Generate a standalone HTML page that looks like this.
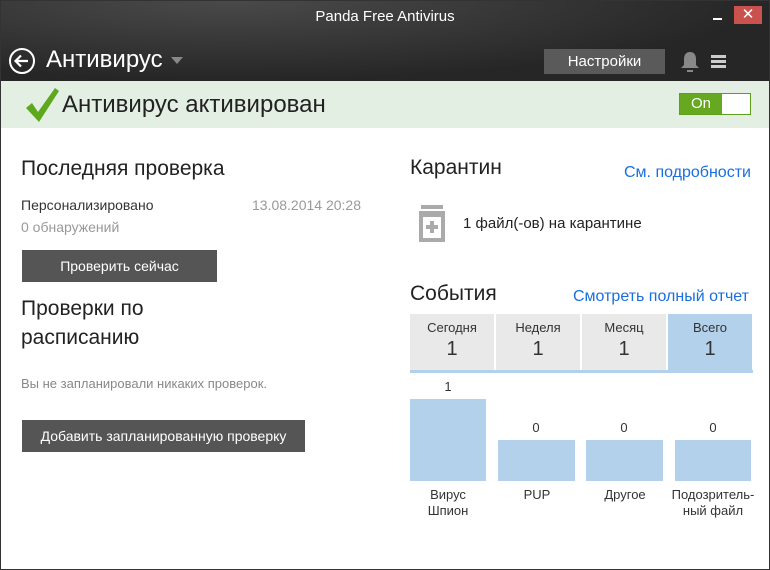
<!DOCTYPE html><html><head><style>
*{margin:0;padding:0;box-sizing:border-box}
body{width:770px;height:570px;overflow:hidden;font-family:"Liberation Sans",sans-serif;background:#fff;position:relative}
.a{position:absolute;white-space:nowrap}
#hd{position:absolute;left:0;top:0;width:770px;height:81px;background:radial-gradient(ellipse at 30% 0%,#4a4a4a,#262626 70%)}
#st{position:absolute;left:0;top:81px;width:770px;height:47px;background:#e4efe4}
.btn{position:absolute;background:#555;color:#fff;font-size:14px;text-align:center}
.tab{position:absolute;top:314px;width:84px;height:56px;background:#e9e9e9;text-align:center;font-size:13px;color:#333;padding-top:6px}
.tab b{display:block;font-weight:normal;font-size:20px;margin-top:3px}
.bar{position:absolute;background:#b3d1ea}
.n{position:absolute;font-size:13px;color:#333;text-align:center;width:76px}
.l{position:absolute;font-size:13px;color:#333;text-align:center;width:90px;line-height:16px}
</style></head><body>
<div id="hd"></div>
<div class="a" style="left:0;width:770px;top:8px;text-align:center;color:#fff;font-size:15px">Panda Free Antivirus</div>
<div class="a" style="left:713px;top:18px;width:9px;height:2px;background:#fff"></div>
<div class="a" style="left:734px;top:6px;width:28px;height:18px;background:#c9524f;color:#fff;font-size:15px;text-align:center;line-height:18px">✕</div>
<svg class="a" style="left:8px;top:47px" width="28" height="28" viewBox="0 0 28 28"><circle cx="14" cy="14" r="12" fill="none" stroke="#fff" stroke-width="2"/><path d="M20 14H8M13 8.5L7.5 14 13 19.5" fill="none" stroke="#fff" stroke-width="2.2"/></svg>
<div class="a" style="left:46px;top:46px;color:#fff;font-size:24px">Антивирус</div>
<div class="a" style="left:171px;top:57px;border-left:6px solid transparent;border-right:6px solid transparent;border-top:7px solid #888"></div>
<div class="btn" style="left:544px;top:49px;width:121px;height:25px;line-height:25px;background:#5a5a5a;font-size:15px">Настройки</div>
<svg class="a" style="left:679px;top:50px" width="22" height="24" viewBox="0 0 22 24"><path d="M11 2c-4 0-6 3-6 7v6l-3 3h18l-3-3V9c0-4-2-7-6-7zM8 20h6v2H8z" fill="#888"/></svg>
<div class="a" style="left:711px;top:55px;width:15px;height:3px;background:#ccc;box-shadow:0 5px 0 #ccc,0 10px 0 #ccc"></div>
<div id="st"></div>
<svg class="a" style="left:24px;top:86px" width="36" height="38" viewBox="0 0 36 38"><path d="M2 22l6-5 6 9L31 2l4 3-20 31z" fill="#5ea81e"/></svg>
<div class="a" style="left:62px;top:91px;font-size:24px;color:#222">Антивирус активирован</div>
<div class="a" style="left:679px;top:93px;width:72px;height:22px;border:1px solid #5e9e1c;background:#fff"><div style="width:42px;height:20px;background:#66a81f;color:#fff;font-size:15px;text-align:center;line-height:20px">On</div></div>
<div class="a" style="left:21px;top:157px;font-size:21px;color:#222">Последняя проверка</div>
<div class="a" style="left:21px;top:197px;font-size:14px;color:#333">Персонализировано</div>
<div class="a" style="left:252px;top:197px;font-size:14px;color:#999">13.08.2014 20:28</div>
<div class="a" style="left:21px;top:219px;font-size:14px;color:#999">0 обнаружений</div>
<div class="btn" style="left:22px;top:250px;width:195px;height:32px;line-height:32px">Проверить сейчас</div>
<div class="a" style="left:21px;top:294px;font-size:21px;color:#222;line-height:29px">Проверки по<br>расписанию</div>
<div class="a" style="left:21px;top:376px;font-size:13px;color:#888">Вы не запланировали никаких проверок.</div>
<div class="btn" style="left:22px;top:420px;width:283px;height:32px;line-height:32px">Добавить запланированную проверку</div>
<div class="a" style="left:410px;top:156px;font-size:21px;color:#222">Карантин</div>
<div class="a" style="left:624px;top:164px;font-size:16px;color:#1a6fe0">См. подробности</div>
<svg class="a" style="left:418px;top:205px" width="30" height="38" viewBox="0 0 30 38"><rect x="3" y="0" width="22" height="4" fill="#aaa"/><rect x="1" y="6" width="26" height="31" fill="#aaa"/><rect x="5" y="12" width="18" height="21" fill="#fff"/><path d="M12 16h4v4h4v4h-4v4h-4v-4H8v-4h4z" fill="#aaa"/></svg>
<div class="a" style="left:463px;top:215px;font-size:15px;color:#222">1 файл(-ов) на карантине</div>
<div class="a" style="left:410px;top:282px;font-size:21px;color:#222">События</div>
<div class="a" style="left:573px;top:288px;font-size:16px;color:#1a6fe0">Смотреть полный отчет</div>
<div class="tab" style="left:410px">Сегодня<b>1</b></div>
<div class="tab" style="left:496px">Неделя<b>1</b></div>
<div class="tab" style="left:582px">Месяц<b>1</b></div>
<div class="tab" style="left:668px;background:#b3d1ea">Всего<b>1</b></div>
<div class="a" style="left:410px;top:370px;width:343px;height:3px;background:#b3d1ea"></div>
<div class="n" style="left:410px;top:379px">1</div>
<div class="bar" style="left:410px;top:399px;width:76px;height:82px"></div>
<div class="n" style="left:498px;top:420px">0</div>
<div class="bar" style="left:498px;top:440px;width:77px;height:41px"></div>
<div class="n" style="left:586px;top:420px">0</div>
<div class="bar" style="left:586px;top:440px;width:77px;height:41px"></div>
<div class="n" style="left:675px;top:420px">0</div>
<div class="bar" style="left:675px;top:440px;width:76px;height:41px"></div>
<div class="l" style="left:403px;top:487px">Вирус<br>Шпион</div>
<div class="l" style="left:492px;top:487px">PUP</div>
<div class="l" style="left:580px;top:487px">Другое</div>
<div class="l" style="left:668px;top:487px">Подозритель-<br>ный файл</div>
<div class="a" style="left:0;top:0;width:770px;height:570px;border:1px solid #333;pointer-events:none"></div>
</body></html>
